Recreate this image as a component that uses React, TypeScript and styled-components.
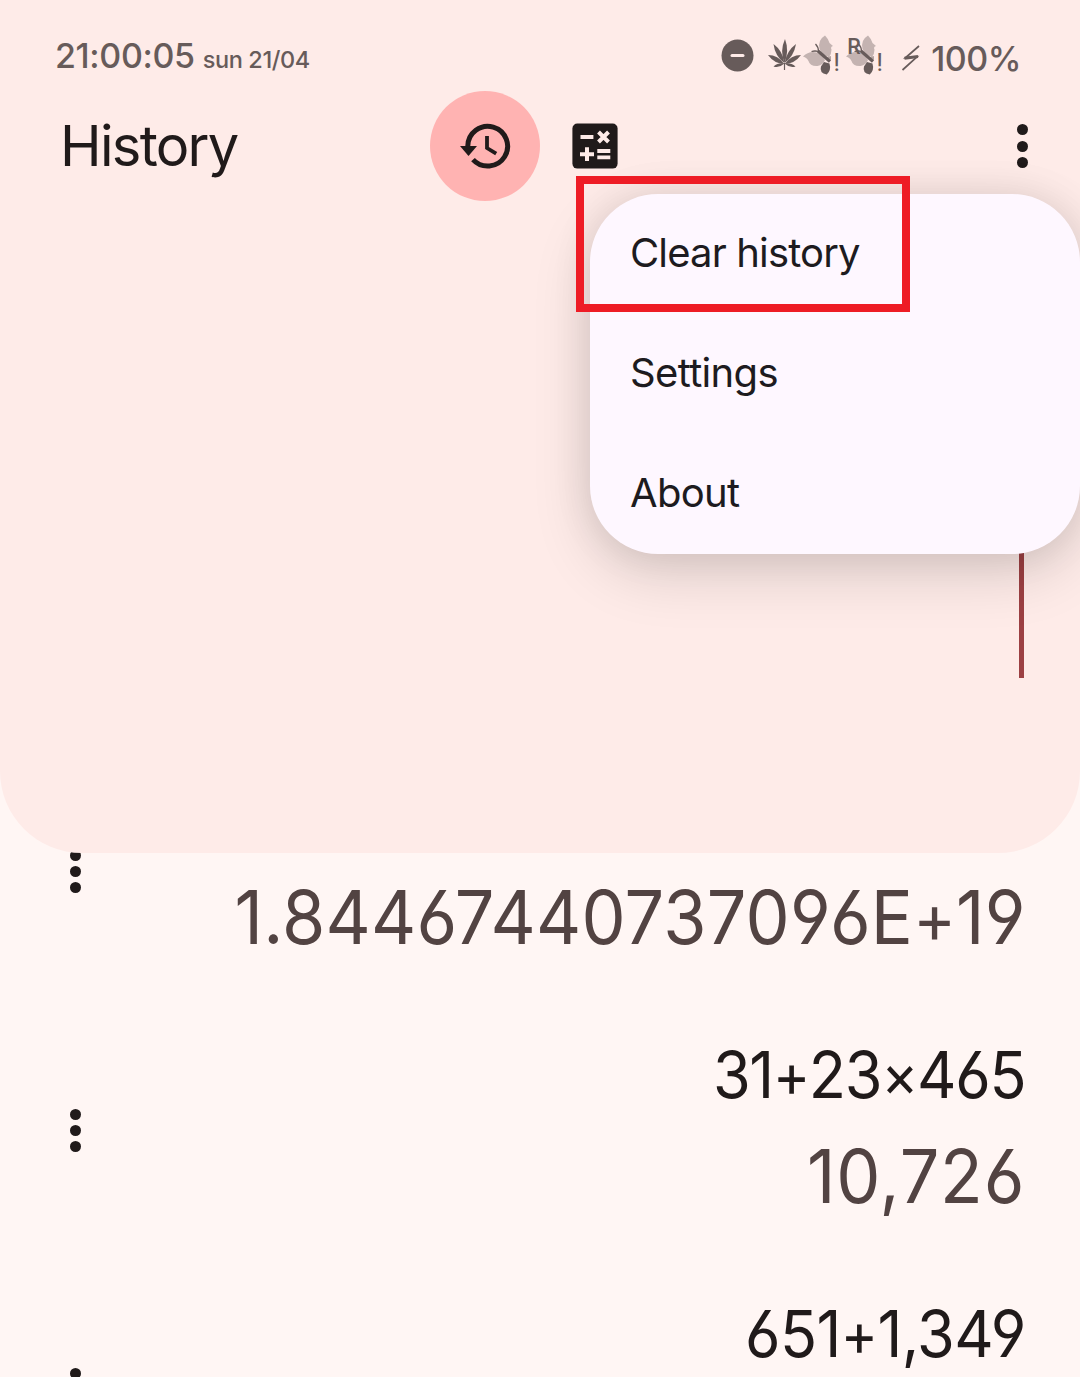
import React from "react";
import styled, { createGlobalStyle } from "styled-components";

const GlobalStyle = createGlobalStyle`
  * { box-sizing: border-box; }
  body {
    margin: 0;
    background: #fff6f4;
    font-family: Inter, "Liberation Sans", sans-serif;
    color: #201a1a;
  }
`;

const Screen = styled.main`
  position: relative;
  width: 1080px;
  height: 1377px;
  overflow: hidden;
  background: #fff6f4;
`;

const Panel = styled.section`
  position: relative;
  z-index: 1;
  display: flex;
  flex-direction: column;
  height: 853px;
  border-radius: 0 0 82px 82px;
  background: #feebe8;
`;

const StatusBar = styled.header`
  display: flex;
  align-items: flex-start;
  justify-content: space-between;
  height: 91px;
  padding: 35px 59px 0 55px;
  color: #675b5a;
  font-weight: 500;
  white-space: nowrap;
`;

const Clock = styled.div`
  display: flex;
  align-items: baseline;
  gap: 8px;
  font-size: 34px;
  line-height: 41px;
  letter-spacing: -0.35px;
`;

const DateText = styled.span`
  font-size: 23.5px;
  letter-spacing: -0.4px;
`;

const StatusIcons = styled.div`
  display: flex;
  align-items: flex-start;
`;

const Battery = styled.span`
  margin: 3px 0 0 10px;
  font-size: 34px;
  line-height: 41px;
  letter-spacing: -0.5px;
`;

const IconSlot = styled.span<{ $gap: number; $top?: number }>`
  display: flex;
  margin-left: ${(p) => p.$gap}px;
  margin-top: ${(p) => p.$top ?? 0}px;
  svg { display: block; overflow: visible; }
`;

const TopBar = styled.nav`
  display: flex;
  align-items: center;
  height: 110px;
  padding: 0 52px 0 59px;
`;

const Title = styled.h1`
  width: 371px;
  margin: 0;
  padding-left: 1px;
  font-size: 56px;
  font-weight: 390;
  line-height: 68px;
  letter-spacing: -1.7px;
`;

const RoundButton = styled.button<{ $active?: boolean }>`
  display: flex;
  align-items: center;
  justify-content: center;
  width: 110px;
  height: 110px;
  padding: 0;
  border: 0;
  border-radius: 50%;
  background: ${(p) => (p.$active ? "#ffb3b2" : "transparent")};
  color: #201a1a;
`;

const KebabButton = styled.button<{ $push?: boolean }>`
  display: flex;
  flex-direction: column;
  align-items: center;
  gap: 5.3px;
  padding: 0;
  margin-left: ${(p) => (p.$push ? "auto" : "0")};
  border: 0;
  background: none;
`;

const Dot = styled.i`
  width: 11px;
  height: 11px;
  border-radius: 50%;
  background: #201a1a;
`;

const InputArea = styled.div`
  display: flex;
  justify-content: flex-end;
  align-items: flex-end;
  height: 477px;
  padding-right: 56px;
`;

const Caret = styled.span`
  width: 5px;
  height: 156px;
  background: #9c4043;
`;

const Menu = styled.ul`
  position: absolute;
  z-index: 2;
  top: 194px;
  left: 590px;
  width: 490px;
  margin: 0;
  padding: 0;
  list-style: none;
  border-radius: 68px;
  background: #fef7ff;
  box-shadow: 0 20px 60px rgba(0, 0, 0, 0.14), 0 0 40px rgba(0, 0, 0, 0.09);
`;

const MenuItem = styled.li<{ $spacing: number }>`
  display: flex;
  align-items: center;
  height: 120px;
  padding: 0 40px 4px 40px;
  color: #1d1b20;
  font-size: 40px;
  font-weight: 390;
  letter-spacing: ${(p) => p.$spacing}px;
`;

const Highlight = styled.div`
  position: absolute;
  z-index: 3;
  top: 176px;
  left: 576px;
  width: 334px;
  height: 136px;
  border: 8px solid #ee1c25;
`;

const HistoryList = styled.section`
  display: flex;
  flex-direction: column;
  margin-top: -111px;
`;

const HistoryRow = styled.article`
  display: flex;
  align-items: center;
  justify-content: space-between;
  flex: none;
  height: 259px;
  padding: 0 54.5px 0 70px;
`;

const Calculation = styled.div`
  display: flex;
  flex-direction: column;
  align-items: flex-end;
  height: 195px;
  white-space: nowrap;
  font-feature-settings: "cv03", "cv04";
  transform: scaleX(0.94);
  transform-origin: right center;
`;

const Expression = styled.div<{ $spacing: number }>`
  height: 99px;
  padding-top: 3px;
  font-size: 65px;
  line-height: 78px;
  letter-spacing: ${(p) => p.$spacing}px;
`;

const Result = styled.div<{ $spacing: number }>`
  color: #524342;
  font-size: 74.5px;
  line-height: 89px;
  letter-spacing: ${(p) => p.$spacing}px;
`;

const Operator = styled.span`
  font-size: 0.92em;
  line-height: 0;
  vertical-align: 0.02em;
`;

const entries = [
  { expression: "", expressionSpacing: 0, result: "1.84467440737096E+19", resultSpacing: 0.25 },
  { expression: "31+23×465", expressionSpacing: -1.4, result: "10,726", resultSpacing: 0.9 },
  { expression: "651+1,349", expressionSpacing: -0.6, result: "", resultSpacing: 0 },
];

const formatOperators = (text: string) =>
  text.split(/([+×])/).map((part, i) => (/[+×]/.test(part) ? <Operator key={i}>{part}</Operator> : part));

const Kebab = ({ push }: { push?: boolean }) => (
  <KebabButton $push={push} aria-label="More options">
    <Dot />
    <Dot />
    <Dot />
  </KebabButton>
);

const HistoryIcon = () => (
  <svg width="110" height="110" viewBox="0 0 110 110" fill="none" stroke="currentColor">
    <path d="M37.8 55A19.9 19.9 0 1 1 43 68.6" strokeWidth="5" />
    <path d="M30 55H47L38.5 65Z" fill="currentColor" stroke="none" />
    <path d="M57 45V57L66.2 62.7" strokeWidth="3.8" />
  </svg>
);

const CalculatorIcon = () => (
  <svg width="46" height="46" viewBox="0 0 46 46">
    <rect x="0.4" y="0.6" width="45.2" height="45" rx="5" fill="currentColor" />
    <g stroke="#feebe8" strokeWidth="4" fill="none">
      <path d="M8.5 14H21.4M8 31.2H22M15 24.3V38" />
      <path d="M26.5 9L36.5 19M36.5 9L26.5 19" />
      <path d="M25.3 28H38.3M25.3 34.4H38.3" strokeWidth="3.8" />
    </g>
  </svg>
);

const DoNotDisturbIcon = () => (
  <svg width="33" height="33" viewBox="0 0 33 33">
    <circle cx="16.5" cy="16.5" r="16" fill="currentColor" />
    <path d="M11 16.5H22" stroke="#feebe8" strokeWidth="3" strokeLinecap="round" />
  </svg>
);

const LeafIcon = () => (
  <svg width="33" height="33" viewBox="0 0 33 33" fill="currentColor">
    <path d="M16.5 24Q11.5 12 17 0Q21.5 12 16.5 24Z" />
    <path d="M16.3 24Q7 17 5.5 5Q15 12 16.3 24Z" />
    <path d="M16.7 24Q26 17 28 5Q18.5 12 16.7 24Z" />
    <path d="M16.3 25Q6 24.5 0 16Q10 16 16.3 25Z" />
    <path d="M16.7 25Q27 24.5 33 16Q23 16 16.7 25Z" />
    <path d="M16.4 24.5Q11 29.5 5.5 27.5Q10 23.5 16.4 24.5Z" />
    <path d="M16.6 24.5Q22 29.5 27.5 27.5Q23 23.5 16.6 24.5Z" />
    <path d="M16.5 24V31" stroke="currentColor" strokeWidth="1.2" />
  </svg>
);

const ButterflyIcon = ({ roaming }: { roaming?: boolean }) => (
  <svg width="38" height="42" viewBox="0 0 38 42" fill="currentColor">
    <g opacity="0.38">
      <path d="M16.5 13Q14.5 4 22 -0.5Q25.5 3 26.5 7L30 10Q27 11 28.5 13.5Q28.5 18 26 21Q19 19 16.5 13Z" />
      <path d="M0 20.5Q6 14.5 13.5 16.5Q19 18.5 22 24Q20 29 14.5 30Q7 30.5 5.5 25Q4 21.5 0 20.5Z" />
    </g>
    <path d="M15 15L27 25.5" stroke="currentColor" strokeWidth="3.2" />
    <path d="M15.5 15.5Q12 14.5 8.5 15.5M15.5 15.5Q15.5 11 12.5 8" fill="none" stroke="currentColor" strokeWidth="1.3" />
    <path d="M21 26L26.5 27.5Q28.5 34 23.8 38.5Q16 37 18 30.5Z" />
    <path d="M23 21.5L28 20V24Z" opacity="0.5" />
    <text x="30.2" y="35" fontFamily="Roboto" fontSize="26.5" fontWeight="400">!</text>
    {roaming && <text x="1.3" y="18" fontFamily="Roboto" fontSize="21.5" fontWeight="500">R</text>}
  </svg>
);

const BoltIcon = () => (
  <svg width="20" height="26" viewBox="0 0 20 26" fill="none" stroke="currentColor">
    <path d="M18 1L4.5 12.8L16 11.8L1.5 25" strokeWidth="1.7" />
    <path d="M3.5 13.2L17 11.6" strokeWidth="3" />
  </svg>
);

export default function App() {
  return (
    <Screen>
      <GlobalStyle />
      <Panel>
        <StatusBar>
          <Clock>
            <span>21:00:05</span>
            <DateText>sun 21/04</DateText>
          </Clock>
          <StatusIcons>
            <IconSlot $gap={0} $top={4}><DoNotDisturbIcon /></IconSlot>
            <IconSlot $gap={14} $top={4}><LeafIcon /></IconSlot>
            <IconSlot $gap={2} $top={1}><ButterflyIcon /></IconSlot>
            <IconSlot $gap={5} $top={1}><ButterflyIcon roaming /></IconSlot>
            <IconSlot $gap={17} $top={10}><BoltIcon /></IconSlot>
            <Battery>100%</Battery>
          </StatusIcons>
        </StatusBar>
        <TopBar>
          <Title>History</Title>
          <RoundButton $active aria-label="History"><HistoryIcon /></RoundButton>
          <RoundButton aria-label="Calculator"><CalculatorIcon /></RoundButton>
          <Kebab push />
        </TopBar>
        <InputArea><Caret /></InputArea>
      </Panel>
      <HistoryList>
        {entries.map((entry, index) => (
          <HistoryRow key={index}>
            <Kebab />
            <Calculation>
              <Expression $spacing={entry.expressionSpacing}>{formatOperators(entry.expression)}</Expression>
              <Result $spacing={entry.resultSpacing}>{formatOperators(entry.result)}</Result>
            </Calculation>
          </HistoryRow>
        ))}
      </HistoryList>
      <Menu>
        <MenuItem $spacing={-0.85}>Clear history</MenuItem>
        <MenuItem $spacing={-0.65}>Settings</MenuItem>
        <MenuItem $spacing={-0.7}>About</MenuItem>
      </Menu>
      <Highlight />
    </Screen>
  );
}
